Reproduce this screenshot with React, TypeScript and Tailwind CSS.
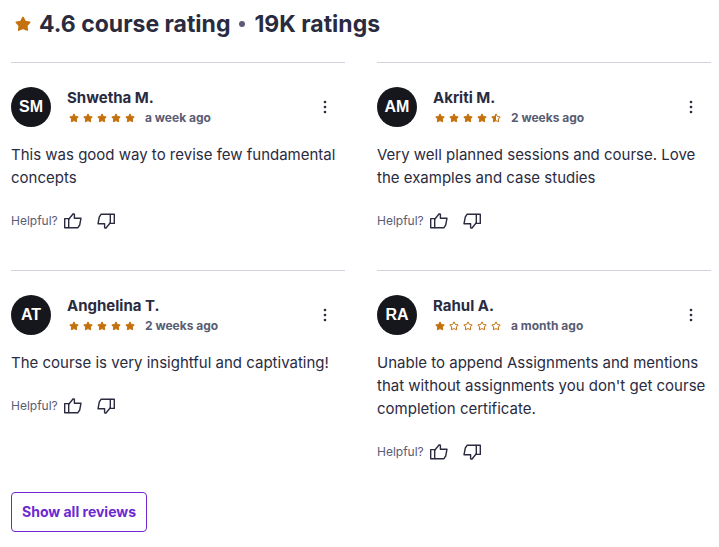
interface Review {
  name: string;
  initials: string;
  rating: number;
  date: string;
  text: string;
}

const reviews: Review[] = [
  {
    name: "Shwetha M.",
    initials: "SM",
    rating: 5,
    date: "a week ago",
    text: "This was good way to revise few fundamental concepts",
  },
  {
    name: "Akriti M.",
    initials: "AM",
    rating: 4.5,
    date: "2 weeks ago",
    text: "Very well planned sessions and course. Love the examples and case studies",
  },
  {
    name: "Anghelina T.",
    initials: "AT",
    rating: 5,
    date: "2 weeks ago",
    text: "The course is very insightful and captivating!",
  },
  {
    name: "Rahul A.",
    initials: "RA",
    rating: 1,
    date: "a month ago",
    text: "Unable to append Assignments and mentions that without assignments you don't get course completion certificate.",
  },
];

const STAR = "M10 1.8 12.8 7 18.4 7.8 14.6 12 15.4 17.6 10 15.2 4.6 17.6 5.4 12 1.6 7.8 7.2 7Z";
const HALF_STAR = "M10 1.8V15.2L4.6 17.6 5.4 12 1.6 7.8 7.2 7Z";

function Star({ fill, className }: { fill: number; className: string }) {
  return (
    <svg viewBox="0 0 20 20" className={className} aria-hidden="true">
      <path
        d={STAR}
        fill={fill >= 1 ? "currentColor" : "none"}
        stroke="currentColor"
        strokeWidth="2"
        strokeLinejoin="round"
      />
      {fill > 0 && fill < 1 && <path d={HALF_STAR} fill="currentColor" />}
    </svg>
  );
}

function StarRating({ value }: { value: number }) {
  return (
    <div className="flex gap-1 text-[#c4710d]" role="img" aria-label={`Rating: ${value} out of 5`}>
      {[0, 1, 2, 3, 4].map((i) => (
        <Star key={i} fill={Math.min(1, Math.max(0, value - i))} className="size-[10px]" />
      ))}
    </div>
  );
}

function ThumbIcon({ down = false }: { down?: boolean }) {
  return (
    <svg
      viewBox="0 0 20 20"
      className={down ? "size-5 rotate-180" : "size-5"}
      fill="none"
      stroke="currentColor"
      strokeWidth="1.4"
      strokeLinejoin="round"
      aria-hidden="true"
    >
      <path d="M1.7 7.6H5.7V16.8H1.7Z" />
      <path d="M5.7 8.2 10.2 2.8 11.4 3.2V7.2H18L16.7 14 14.8 16.8H5.7" />
    </svg>
  );
}

function ReviewCard({ review }: { review: Review }) {
  return (
    <article className="border-t border-[#d1d2e0] pt-6">
      <div className="flex items-center">
        <div className="flex size-10 shrink-0 items-center justify-center rounded-full bg-[#16161d] font-['Liberation_Sans',sans-serif] text-base font-bold text-white">
          {review.initials}
        </div>
        <div className="ml-4 min-w-0 flex-1">
          <h3 className="text-[15px] leading-[22px] font-bold">{review.name}</h3>
          <div className="flex items-center gap-[10px] pl-[2px]">
            <StarRating value={review.rating} />
            <span className="text-xs leading-[18px] font-bold text-[#595c73]">{review.date}</span>
          </div>
        </div>
        <button type="button" aria-label="More options" className="flex size-10 items-center justify-center">
          <svg viewBox="0 0 20 20" className="size-5" fill="currentColor" aria-hidden="true">
            <circle cx="10" cy="5" r="1.3" />
            <circle cx="10" cy="10" r="1.3" />
            <circle cx="10" cy="15" r="1.3" />
          </svg>
        </button>
      </div>
      <p className="mt-4 text-[15px] leading-[23px]">{review.text}</p>
      <div className="mt-4 flex h-8 items-center">
        <span className="text-xs text-[#595c73]">Helpful?</span>
        <button type="button" aria-label="Helpful" className="ml-[5px] flex h-8 w-[33px] items-center">
          <ThumbIcon />
        </button>
        <button type="button" aria-label="Not helpful" className="flex h-8 items-center">
          <ThumbIcon down />
        </button>
      </div>
    </article>
  );
}

export default function App() {
  return (
    <section className="bg-white pt-2 pr-2 pb-4 pl-[11px] font-['Inter','Liberation_Sans',sans-serif] text-[#2a2b3f]">
      <h2 className="flex items-center pl-1 text-[23px] leading-8 font-bold">
        <Star fill={1} className="size-4 text-[#c4710d]" />
        <span className="ml-2">4.6 course rating</span>
        <span className="mx-[9px] size-[6px] rounded-full bg-[#595c73]" />
        <span>19K ratings</span>
      </h2>
      <div className="mt-[22px] grid grid-cols-2 gap-x-8 gap-y-[33px]">
        {reviews.map((review) => (
          <ReviewCard key={review.name} review={review} />
        ))}
      </div>
      <button
        type="button"
        className="mt-6 h-10 rounded border border-[#6d28d2] px-[10px] text-sm font-bold text-[#6d28d2]"
      >
        Show all reviews
      </button>
    </section>
  );
}
